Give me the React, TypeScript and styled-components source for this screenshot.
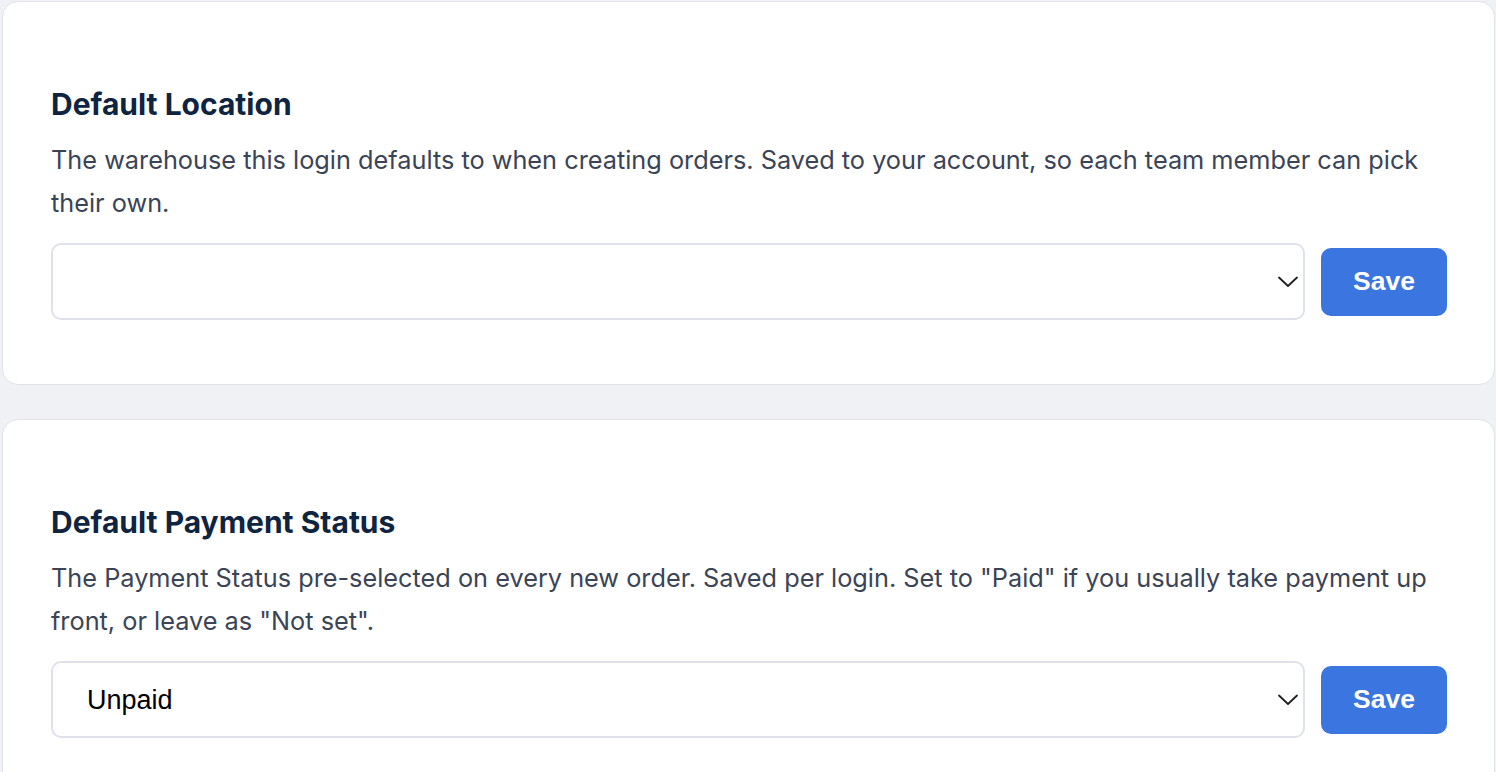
import styled, { createGlobalStyle } from "styled-components";

const GlobalStyle = createGlobalStyle`
  html, body {
    margin: 0;
    padding: 0;
    background: #f0f1f5;
  }
  body {
    font-family: Inter, "Noto Sans", sans-serif;
  }
`;

const Page = styled.div`
  display: flex;
  flex-direction: column;
  gap: 34px;
  padding: 1px 1px 0 2px;
  height: 772px;
  overflow: hidden;
  box-sizing: border-box;
`;

const Card = styled.section`
  background: white;
  border: 1.5px solid #e1e3e9;
  border-radius: 16px;
  padding: 85px 47px 64px 48px;
  flex-shrink: 0;
`;

const Title = styled.h2`
  margin: 0;
  font-size: 30px;
  line-height: 34px;
  font-weight: 700;
  color: #0f2440;
`;

const Description = styled.p`
  margin: 17px 0 19px;
  font-size: 25.3px;
  line-height: 43px;
  color: #3b4456;
`;

const Row = styled.div`
  display: flex;
  align-items: center;
  gap: 16px;
`;

const SelectWrap = styled.div`
  position: relative;
  flex: 1;
`;

const Select = styled.select`
  appearance: none;
  width: 100%;
  height: 77px;
  border: 2px solid #dfe2ea;
  border-radius: 10px;
  background: white;
  padding: 0 60px 0 34px;
  font-family: "Liberation Sans", Arial, sans-serif;
  font-size: 27px;
  color: #000;
  outline: none;
`;

const Chevron = styled.svg`
  position: absolute;
  right: 0;
  top: 50%;
  transform: translateY(-50%);
  pointer-events: none;
`;

const SaveButton = styled.button`
  width: 126px;
  height: 68px;
  border: none;
  border-radius: 10px;
  background: #3a75e0;
  color: white;
  font-family: "Liberation Sans", Arial, sans-serif;
  font-weight: 700;
  font-size: 26.5px;
  cursor: pointer;
`;

type SettingProps = {
  title: string;
  description: string;
  options: string[];
  value: string;
};

const Setting = ({ title, description, options, value }: SettingProps) => (
  <Card>
    <Title>{title}</Title>
    <Description>{description}</Description>
    <Row>
      <SelectWrap>
        <Select defaultValue={value}>
          {options.map((o) => (
            <option key={o} value={o}>
              {o}
            </option>
          ))}
        </Select>
        <Chevron width="34" height="20" viewBox="0 0 34 20">
          <path d="M8 5.5 L17 14 L26 5.5" fill="none" stroke="#1f1f1f" strokeWidth="1.8" strokeLinecap="round" strokeLinejoin="round" />
        </Chevron>
      </SelectWrap>
      <SaveButton>Save</SaveButton>
    </Row>
  </Card>
);

export default function App() {
  return (
    <>
      <GlobalStyle />
      <Page>
        <Setting
          title="Default Location"
          description="The warehouse this login defaults to when creating orders. Saved to your account, so each team member can pick their own."
          options={[""]}
          value=""
        />
        <Setting
          title="Default Payment Status"
          description={'The Payment Status pre-selected on every new order. Saved per login. Set to "Paid" if you usually take payment up front, or leave as "Not set".'}
          options={["Not set", "Unpaid", "Paid"]}
          value="Unpaid"
        />
      </Page>
    </>
  );
}
